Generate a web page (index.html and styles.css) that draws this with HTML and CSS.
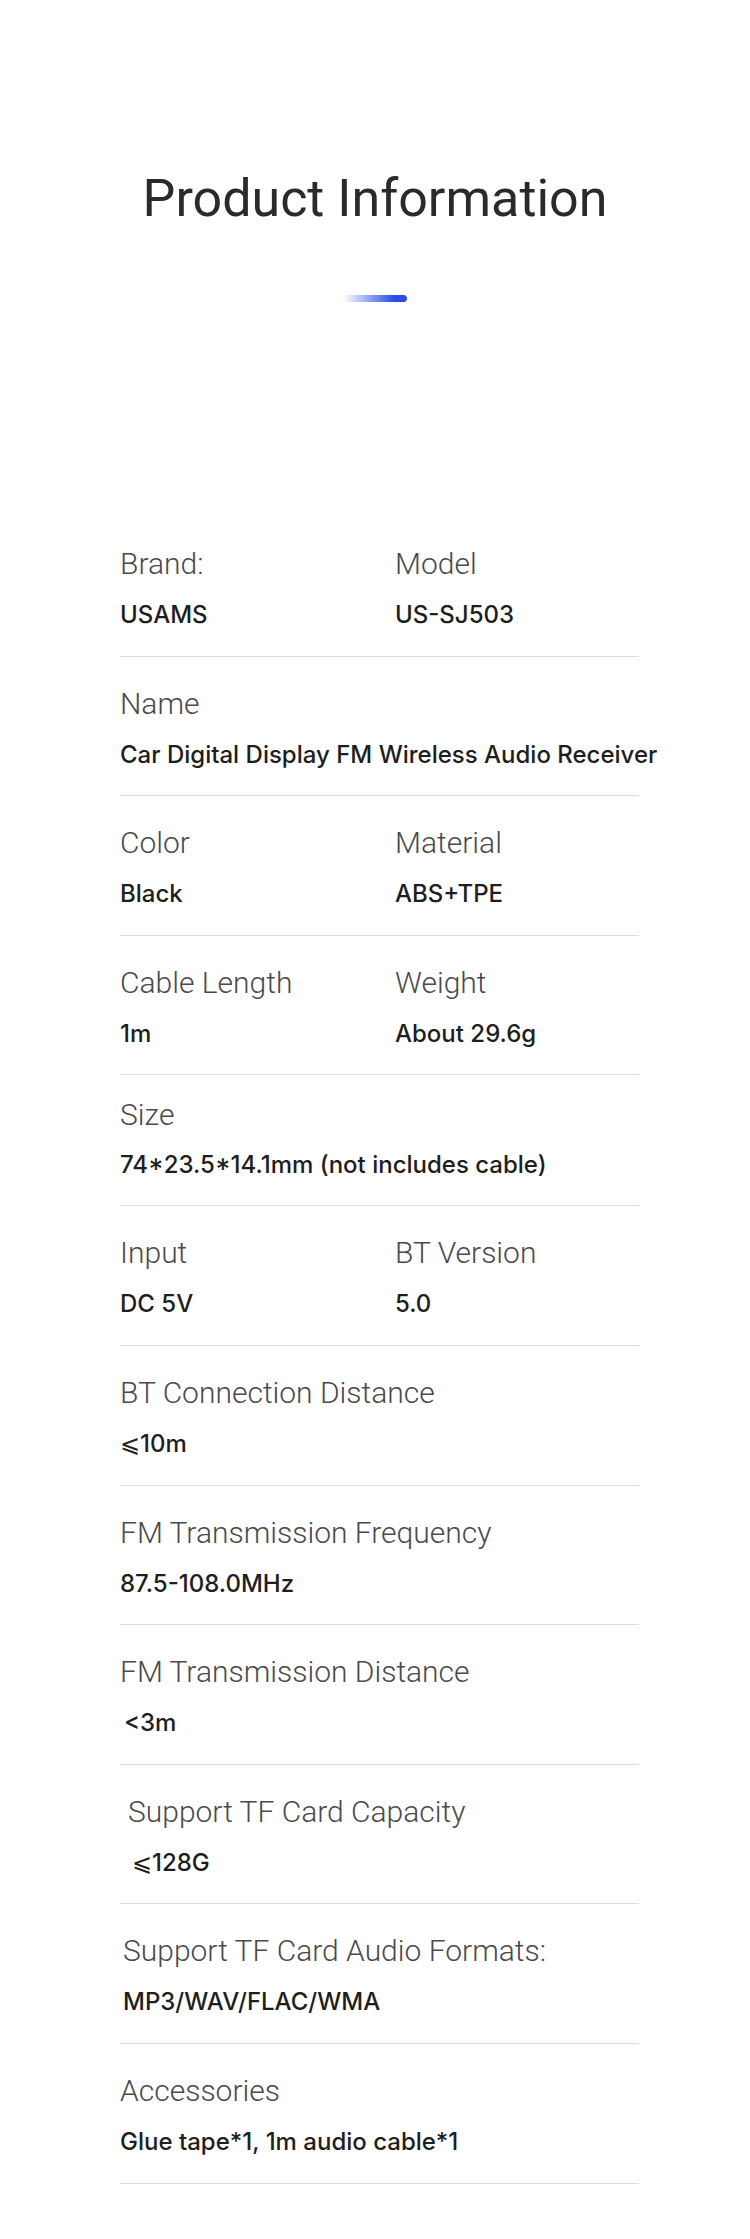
FILE: index.html
```html
<!DOCTYPE html>
<html>
<head>
  <link rel="stylesheet" href="styles.css">
</head>
<body>
  <div class="header">
    <h1>Product Information</h1>
    <div class="bar"></div>
  </div>

  <div class="specs">
    <div class="row">
      <div class="item">
        <div class="label">Brand:</div>
        <div class="value">USAMS</div>
      </div>
      <div class="item">
        <div class="label">Model</div>
        <div class="value">US-SJ503</div>
      </div>
    </div>
    <div class="row">
      <div class="item">
        <div class="label">Name</div>
        <div class="value">Car Digital Display FM Wireless Audio Receiver</div>
      </div>
    </div>
    <div class="row">
      <div class="item">
        <div class="label">Color</div>
        <div class="value">Black</div>
      </div>
      <div class="item">
        <div class="label">Material</div>
        <div class="value">ABS+TPE</div>
      </div>
    </div>
    <div class="row">
      <div class="item">
        <div class="label">Cable Length</div>
        <div class="value">1m</div>
      </div>
      <div class="item">
        <div class="label">Weight</div>
        <div class="value">About 29.6g</div>
      </div>
    </div>
    <div class="row short">
      <div class="item">
        <div class="label">Size</div>
        <div class="value">74*23.5*14.1mm (not includes cable)</div>
      </div>
    </div>
    <div class="row">
      <div class="item">
        <div class="label">Input</div>
        <div class="value">DC 5V</div>
      </div>
      <div class="item">
        <div class="label">BT Version</div>
        <div class="value">5.0</div>
      </div>
    </div>
    <div class="row">
      <div class="item">
        <div class="label">BT Connection Distance</div>
        <div class="value">⩽10m</div>
      </div>
    </div>
    <div class="row">
      <div class="item">
        <div class="label">FM Transmission Frequency</div>
        <div class="value">87.5-108.0MHz</div>
      </div>
    </div>
    <div class="row">
      <div class="item">
        <div class="label">FM Transmission Distance</div>
        <div class="value indent">&lt;3m</div>
      </div>
    </div>
    <div class="row">
      <div class="item shifted">
        <div class="label">Support TF Card Capacity</div>
        <div class="value indent">⩽128G</div>
      </div>
    </div>
    <div class="row">
      <div class="item nudged">
        <div class="label">Support TF Card Audio Formats:</div>
        <div class="value">MP3/WAV/FLAC/WMA</div>
      </div>
    </div>
    <div class="row">
      <div class="item">
        <div class="label">Accessories</div>
        <div class="value">Glue tape*1, 1m audio cable*1</div>
      </div>
    </div>
  </div>
</body>
</html>
```

FILE: styles.css
```css
body {
  margin: 0;
  background-color: #fff;
  font-family: Roboto, "Noto Sans", sans-serif;
  color: #222;
}

.header {
  padding-top: 169px;
  text-align: center;
}

h1 {
  margin: 0;
  font-size: 52px;
  line-height: 60px;
  font-weight: 400;
  color: #2a2a2e;
}

.bar {
  width: 64px;
  height: 7px;
  margin: 66px auto 0;
  border-radius: 4px;
  background: linear-gradient(to right, rgba(42, 77, 230, 0), #2a4de6 80%);
}

.specs {
  width: 519px;
  margin: 215px 0 0 120px;
}

.row {
  display: grid;
  grid-template-columns: 275px 1fr;
  padding: 29px 0 25.6px;
  border-bottom: 1px solid #dddddd;
}

.row.short {
  padding: 22px 0 25px;
}

.item {
  white-space: nowrap;
}

.label {
  font-size: 30px;
  line-height: 36px;
  font-weight: 300;
  color: #4a4a4a;
}

.value {
  margin-top: 18px;
  font-family: Inter, Roboto, sans-serif;
  font-size: 24px;
  line-height: 30px;
  font-weight: 500;
  color: #1e1e1e;
}

.row.short .value {
  margin-top: 17px;
}

.value.indent {
  padding-left: 4px;
}

.shifted {
  padding-left: 8px;
}

.nudged {
  padding-left: 3px;
}
```
